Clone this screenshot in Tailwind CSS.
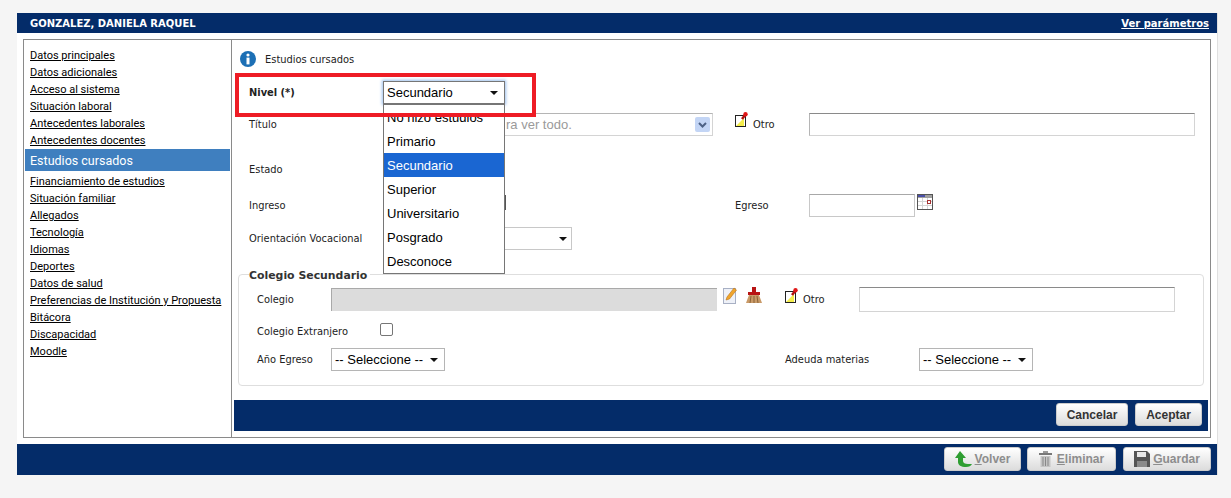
<!DOCTYPE html>
<html lang="en">
<head>
  <meta charset="UTF-8">
  <title>Estudios cursados</title>
  <script src="https://cdn.jsdelivr.net/npm/@tailwindcss/browser@4"></script>
</head>
<body class="bg-[#f5f5f5] h-[498px] overflow-hidden font-['DejaVu_Sans',sans-serif] text-[9.9px] text-[#222]">

<div class="ml-[17px] mt-[13px] w-[1201px] relative border-r border-[#e0e0e0]">
  <!-- Header -->
  <header class="h-[20px] bg-[#042c69] text-white font-bold flex justify-between items-center pl-[13px] pr-[8px] text-[10px]">
    <span>GONZALEZ, DANIELA RAQUEL</span>
    <a href="#" class="underline">Ver parámetros</a>
  </header>

  <div class="bg-white h-[411px] pt-[6px] pl-[6px]">
    <div class="w-[1188px] h-[399px] border border-[#8a8a8a] flex">

      <!-- Sidebar -->
      <nav class="w-[208px] shrink-0 border-r border-[#8a8a8a] pt-[7px] font-['Roboto',sans-serif] text-[11px] text-black whitespace-nowrap">
        <a href="#" class="block h-[17px] leading-[17px] pl-[6px] underline">Datos principales</a>
        <a href="#" class="block h-[17px] leading-[17px] pl-[6px] underline">Datos adicionales</a>
        <a href="#" class="block h-[17px] leading-[17px] pl-[6px] underline">Acceso al sistema</a>
        <a href="#" class="block h-[17px] leading-[17px] pl-[6px] underline">Situación laboral</a>
        <a href="#" class="block h-[17px] leading-[17px] pl-[6px] underline">Antecedentes laborales</a>
        <a href="#" class="block h-[17px] leading-[17px] pl-[6px] underline">Antecedentes docentes</a>
        <div class="h-[22px] leading-[23px] ml-px w-[205px] pl-[5px] bg-[#3f7fbf] text-white text-[12.5px] mb-[2px]">Estudios cursados</div>
        <a href="#" class="block h-[17px] leading-[17px] pl-[6px] underline">Financiamiento de estudios</a>
        <a href="#" class="block h-[17px] leading-[17px] pl-[6px] underline">Situación familiar</a>
        <a href="#" class="block h-[17px] leading-[17px] pl-[6px] underline">Allegados</a>
        <a href="#" class="block h-[17px] leading-[17px] pl-[6px] underline">Tecnología</a>
        <a href="#" class="block h-[17px] leading-[17px] pl-[6px] underline">Idiomas</a>
        <a href="#" class="block h-[17px] leading-[17px] pl-[6px] underline">Deportes</a>
        <a href="#" class="block h-[17px] leading-[17px] pl-[6px] underline">Datos de salud</a>
        <a href="#" class="block h-[17px] leading-[17px] pl-[6px] underline">Preferencias de Institución y Propuesta</a>
        <a href="#" class="block h-[17px] leading-[17px] pl-[6px] underline">Bitácora</a>
        <a href="#" class="block h-[17px] leading-[17px] pl-[6px] underline">Discapacidad</a>
        <a href="#" class="block h-[17px] leading-[17px] pl-[6px] underline">Moodle</a>
      </nav>

      <!-- Form -->
      <main class="flex-1 relative pt-[11px]">
        <div class="flex items-center h-[16px] pl-[8px] gap-[9px]">
          <svg width="16" height="16" viewBox="0 0 16 16"><circle cx="8" cy="8" r="8" fill="#1c6fb5"/><circle cx="8" cy="4" r="1.6" fill="#fff"/><rect x="6.5" y="6.6" width="3" height="6.8" fill="#fff"/></svg>
          <span class="pt-[2px]">Estudios cursados</span>
        </div>

        <div class="mt-[14px] h-[23px] flex items-center pl-[17px]">
          <b class="w-[134px] pt-[2px]">Nivel (*)</b>
          <div class="w-[122px] h-[23px] border border-[#767676] shadow-[0_0_3px_1px_#9cc0ee] flex items-center justify-between pl-[3px] pr-[6px] font-['Liberation_Sans',sans-serif] text-[13px] text-black">
            Secundario
            <svg width="8" height="4" viewBox="0 0 8 4"><path d="M0 0h8L4 4z" fill="#111"/></svg>
          </div>
        </div>

        <div class="mt-[9px] h-[23px] flex items-center pl-[17px]">
          <span class="w-[134px] pt-[2px]">Título</span>
          <div class="w-[330px] h-[23px] border border-[#d4d4d4] border-t-[#b5b5b5] flex items-center justify-between pl-[122px] pr-[2px] font-['Liberation_Sans',sans-serif] text-[13px] text-[#9a9a9a]">
            ra ver todo.
            <span class="w-[15px] h-[15px] rounded-[2px] bg-[#c3d5f5] flex items-center justify-center">
              <svg width="9" height="6" viewBox="0 0 9 6"><path d="M1 1l3.5 3.5L8 1" fill="none" stroke="#4d6185" stroke-width="2"/></svg>
            </span>
          </div>
          <div class="ml-[22px] w-[74px] flex items-start gap-[5px]">
            <svg class="mt-[-4px]" width="13" height="16" viewBox="0 0 13 16"><rect x="0.5" y="3.5" width="10" height="11" fill="#fff" stroke="#222"/><path d="M1 14l8-8v8z" fill="#f5ee4c"/><path d="M7 7l4-5" stroke="#b01010" stroke-width="2.500"/><circle cx="10.500" cy="2.200" r="2.200" fill="#e01818"/></svg>
            <span class="mt-[2px]">Otro</span>
          </div>
          <input class="w-[386px] h-[23px] border border-[#d4d4d4] border-t-[#8a8a8a] border-l-[#b5b5b5]">
        </div>

        <div class="mt-[22px] h-[23px] flex items-center pl-[17px]">
          <span class="pt-[2px]">Estado</span>
        </div>

        <div class="mt-[13px] h-[23px] flex items-center pl-[17px]">
          <span class="w-[134px] pt-[2px]">Ingreso</span>
          <div class="w-[352px] h-[23px] relative">
            <span class="block ml-[121px] mt-[1px] w-[2px] h-[15px] border-r border-y border-[#555]"></span>
          </div>
          <span class="w-[74px] pt-[2px]">Egreso</span>
          <input class="w-[106px] h-[23px] border border-[#c8c8c8] border-t-[#a8a8a8]">
          <svg class="ml-[2px] mb-[7px]" width="16" height="16" viewBox="0 0 16 16"><rect x="0.5" y="0.5" width="15" height="15" fill="#fff" stroke="#555"/><path d="M1 1h14v3H1z" fill="#a0a0a0"/><path d="M1 1h7v2H1z" fill="#4a4fa8"/><path d="M1 7.500h14M1 11.500h14M5.500 4v11M10.500 4v11" stroke="#d4d4d4"/><rect x="10.500" y="6.500" width="3" height="3" fill="#fff" stroke="#a83232"/></svg>
        </div>

        <div class="mt-[10px] h-[23px] flex items-center pl-[17px]">
          <span class="w-[134px] pt-[2px]">Orientación Vocacional</span>
          <div class="w-[189px] h-[23px] border border-[#c8c8c8] flex items-center justify-end pr-[4px]">
            <svg width="8" height="4" viewBox="0 0 8 4"><path d="M0 0h8L4 4z" fill="#111"/></svg>
          </div>
        </div>

        <!-- Colegio -->
        <fieldset class="mt-[17px] ml-[6px] w-[966px] h-[119px] border border-[#dedede] rounded-[4px] pl-[18px]">
          <legend class="ml-[-8px] text-[10.9px] font-bold h-[15px] leading-[17px] text-[#333] pr-[3px]">Colegio Secundario</legend>

          <div class="mt-[5px] h-[25px] flex items-center">
            <span class="w-[74px] pt-[2px]">Colegio</span>
            <div class="w-[386px] h-[23px] bg-[#dcdcdc] border-l border-t border-[#a9a9a9]"></div>
            <div class="w-[68px] flex items-start gap-[8px] pl-[6px] mt-[-8px]">
              <svg width="15" height="17" viewBox="0 0 15 17"><rect x="0.500" y="1.500" width="12" height="15" fill="#eef1f8" stroke="#a8b0c4"/><path d="M3 13l1-3 7-9 2.500 2-7 9z" fill="#f0a52c" stroke="#b8741a" stroke-width="0.600"/></svg>
              <svg width="16" height="16" viewBox="0 0 16 16"><path d="M6 0h4v5h4v3H2V5h4z" fill="#b81414"/><path d="M3 8h10l3 8H0z" fill="#c99a68"/><path d="M4 16l1-7M8 16V9M12 16l-1-7" stroke="#8a6236"/></svg>
            </div>
            <svg class="mt-[-8px]" width="13" height="16" viewBox="0 0 13 16"><rect x="0.5" y="3.5" width="10" height="11" fill="#fff" stroke="#222"/><path d="M1 14l8-8v8z" fill="#f5ee4c"/><path d="M7 7l4-5" stroke="#b01010" stroke-width="2.500"/><circle cx="10.500" cy="2.200" r="2.200" fill="#e01818"/></svg>
            <span class="ml-[5px] w-[56px] mt-[2px]">Otro</span>
            <input class="w-[316px] h-[25px] border border-[#d4d4d4] border-t-[#8a8a8a]">
          </div>

          <div class="mt-[11px] h-[14px] flex items-center">
            <span class="w-[123px] mt-[4px]">Colegio Extranjero</span>
            <span class="w-[13px] h-[13px] border border-[#767676] rounded-[2px] mb-[2px]"></span>
          </div>

          <div class="mt-[11px] h-[23px] flex items-center">
            <span class="w-[74px] pt-[2px]">Año Egreso</span>
            <div class="w-[114px] h-[23px] border border-[#b5b5b5] flex items-center justify-between pl-[3px] pr-[6px] font-['Liberation_Sans',sans-serif] text-[13px] text-black whitespace-nowrap">
              -- Seleccione --
              <svg width="8" height="4" viewBox="0 0 8 4"><path d="M0 0h8L4 4z" fill="#111"/></svg>
            </div>
            <span class="ml-[340px] w-[134px] pt-[2px]">Adeuda materias</span>
            <div class="w-[114px] h-[23px] border border-[#b5b5b5] flex items-center justify-between pl-[3px] pr-[6px] font-['Liberation_Sans',sans-serif] text-[13px] text-black whitespace-nowrap">
              -- Seleccione --
              <svg width="8" height="4" viewBox="0 0 8 4"><path d="M0 0h8L4 4z" fill="#111"/></svg>
            </div>
          </div>
        </fieldset>

        <div class="mt-[14px] ml-[2px] w-[974px] h-[31px] bg-[#042c69] flex justify-end items-start gap-[7px] pt-[3px] pr-[6px] font-['Liberation_Sans',sans-serif] text-[12px] font-bold text-[#333]">
          <button class="w-[72px] h-[23px] rounded-[3px] bg-gradient-to-b from-white to-[#dcdcdc] border border-[#ccc]">Cancelar</button>
          <button class="w-[67px] h-[23px] rounded-[3px] bg-gradient-to-b from-white to-[#dcdcdc] border border-[#ccc]">Aceptar</button>
        </div>

        <!-- Open dropdown -->
        <ul class="absolute left-[151px] top-[64px] w-[122px] h-[170px] bg-white border border-[#767676] font-['Liberation_Sans',sans-serif] text-[13px] text-black">
          <li class="h-[24px] leading-[25px] pl-[3px]">No hizo estudios</li>
          <li class="h-[24px] leading-[25px] pl-[3px]">Primario</li>
          <li class="h-[24px] leading-[25px] pl-[3px] bg-[#1a66d2] text-white">Secundario</li>
          <li class="h-[24px] leading-[25px] pl-[3px]">Superior</li>
          <li class="h-[24px] leading-[25px] pl-[3px]">Universitario</li>
          <li class="h-[24px] leading-[25px] pl-[3px]">Posgrado</li>
          <li class="h-[24px] leading-[25px] pl-[3px]">Desconoce</li>
        </ul>

        <!-- Red highlight -->
        <div class="absolute left-[3px] top-[33px] w-[301px] h-[44px] border-[4px] border-[#ee1c25]"></div>
      </main>
    </div>
  </div>

  <!-- Footer -->
  <footer class="h-[31px] bg-[#042c69] flex justify-end items-start pt-[3px] pr-[6px] font-['Liberation_Sans',sans-serif] text-[12px] font-bold text-[#8d8d8d]">
    <button class="w-[77px] h-[24px] rounded-[3px] bg-gradient-to-b from-white to-[#dcdcdc] border border-[#ccc] flex items-center justify-center gap-[2px]">
      <svg width="18" height="16" viewBox="0 0 18 16"><path d="M5 0l6 7H8v3c0 2 2 3 5 3h4c-1 2-3 3-6 3-5 0-8-2-8-5V7H0z" fill="#2f9e32"/></svg>
      <span><u>V</u>olver</span>
    </button>
    <button class="ml-[6px] w-[89px] h-[24px] rounded-[3px] bg-gradient-to-b from-white to-[#dcdcdc] border border-[#ccc] flex items-center justify-center gap-[5px]">
      <svg width="13" height="16" viewBox="0 0 13 16"><rect x="0" y="2" width="13" height="2" fill="#777"/><rect x="4" y="0" width="5" height="2" fill="#999"/><path d="M1.500 5h10v11h-10z" fill="#c4c4c4"/><path d="M4 6v9M6.500 6v9M9 6v9" stroke="#888"/></svg>
      <span><u>E</u>liminar</span>
    </button>
    <button class="ml-[7px] w-[88px] h-[24px] rounded-[3px] bg-gradient-to-b from-white to-[#dcdcdc] border border-[#ccc] flex items-center justify-center gap-[3px]">
      <svg width="16" height="16" viewBox="0 0 16 16"><path d="M0 0h13l3 3v13H0z" fill="#555"/><rect x="3" y="1" width="9" height="5" fill="#e8e8e8"/><rect x="3" y="10" width="10" height="6" fill="#8a8a8a"/></svg>
      <span><u>G</u>uardar</span>
    </button>
  </footer>
</div>

</body>
</html>
